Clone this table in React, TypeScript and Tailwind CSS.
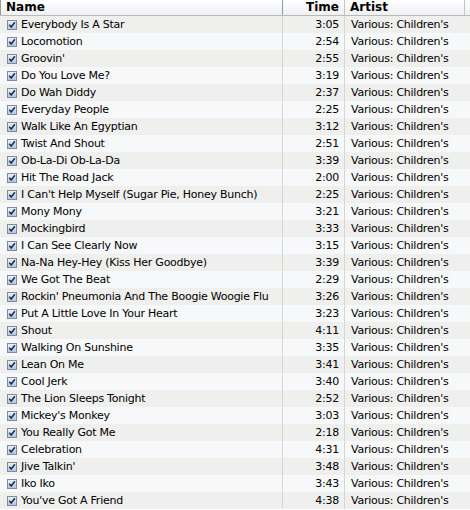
const TRACKS: [string, string][] = [
  ['Everybody Is A Star', '3:05'],
  ['Locomotion', '2:54'],
  ["Groovin'", '2:55'],
  ['Do You Love Me?', '3:19'],
  ['Do Wah Diddy', '2:37'],
  ['Everyday People', '2:25'],
  ['Walk Like An Egyptian', '3:12'],
  ['Twist And Shout', '2:51'],
  ['Ob-La-Di Ob-La-Da', '3:39'],
  ['Hit The Road Jack', '2:00'],
  ["I Can't Help Myself (Sugar Pie, Honey Bunch)", '2:25'],
  ['Mony Mony', '3:21'],
  ['Mockingbird', '3:33'],
  ['I Can See Clearly Now', '3:15'],
  ['Na-Na Hey-Hey (Kiss Her Goodbye)', '3:39'],
  ['We Got The Beat', '2:29'],
  ["Rockin' Pneumonia And The Boogie Woogie Flu", '3:26'],
  ['Put A Little Love In Your Heart', '3:23'],
  ['Shout', '4:11'],
  ['Walking On Sunshine', '3:35'],
  ['Lean On Me', '3:41'],
  ['Cool Jerk', '3:40'],
  ['The Lion Sleeps Tonight', '2:52'],
  ["Mickey's Monkey", '3:03'],
  ['You Really Got Me', '2:18'],
  ['Celebration', '4:31'],
  ["Jive Talkin'", '3:48'],
  ['Iko Iko', '3:43'],
  ["You've Got A Friend", '4:38'],
]

/* ── little aqua checkbox ── */
function Check() {
  return (
    <svg width="10" height="10" viewBox="0 0 10 10" className="shrink-0">
      <defs>
        <linearGradient id="cb" x1="0" y1="0" x2="0" y2="1">
          <stop offset="0" stopColor="#eef3f9" />
          <stop offset="1" stopColor="#afc4de" />
        </linearGradient>
      </defs>
      <rect x="0.5" y="0.5" width="9" height="9" fill="url(#cb)" stroke="#7c8ba0" />
      <path d="M2.3 4.8 L4.2 7 L7.9 2.2" fill="none" stroke="#1b2a4c" strokeWidth="1.5" />
    </svg>
  )
}

export default function App() {
  return (
    <div className="w-[470px] h-[510px] overflow-hidden bg-white text-black" style={{ fontFamily: '"DejaVu Sans", "Liberation Sans", sans-serif' }}>
      {/* header */}
      <div className="grid grid-cols-[283px_62px_120px_5px] h-[16px] border-b border-[#b9b9b9] bg-gradient-to-b from-[#ffffff] to-[#eef0f2] text-[12px] font-bold leading-[15px]">
        <div className="border-l border-[#9a9a9a] border-r border-r-[#8a9ab0] pl-[5px]">Name</div>
        <div className="border-r border-[#c4c4c4] text-right pr-[5px]">Time</div>
        <div className="border-r border-[#c4c4c4] pl-[5px]">Artist</div>
        <div />
      </div>
      {/* rows */}
      {TRACKS.map(([name, time], i) => (
        <div
          key={name}
          className={`grid grid-cols-[283px_62px_125px] h-[17px] text-[11px] tracking-[-0.25px] leading-[17px] ${i % 2 === 0 ? 'bg-[#efefed]' : 'bg-[#f7f8fa]'}`}
        >
          <div className="flex items-center gap-[4px] pl-[7px] border-r border-[#d6d6d6] whitespace-nowrap overflow-hidden">
            <Check />
            <span>{name}</span>
          </div>
          <div className="text-right pr-[5px] border-r border-[#d6d6d6]">{time}</div>
          <div className="pl-[6px] whitespace-nowrap overflow-hidden">Various: Children's</div>
        </div>
      ))}
    </div>
  )
}
